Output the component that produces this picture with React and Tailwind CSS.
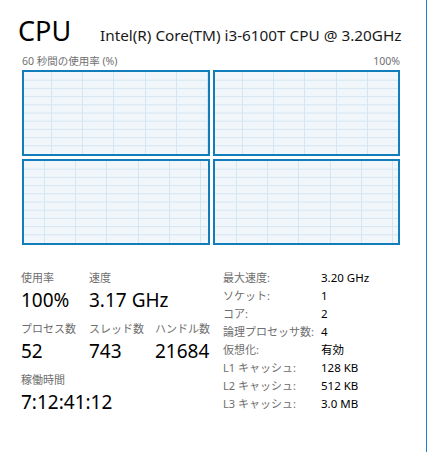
// CPU パフォーマンス画面
const FONT = { fontFamily: '"Noto Sans", "Noto Sans CJK JP", sans-serif' }

const graphs = [
  { offset: 27 },
  { offset: 27 },
  { offset: 20 },
  { offset: 21 },
]

function Graph({ offset }) {
  const xs = []
  for (let x = offset; x < 190; x += 31.2) xs.push(Math.round(x) + 0.5)
  const ys = [1, 2, 3, 4, 5, 6, 7, 8, 9]
  return (
    <div className="relative h-[86px] border-2 border-[#117dbb] bg-[#f1f6fa] overflow-hidden">
      <svg className="absolute inset-0 w-full h-full">
        {ys.map((k) => (
          <line key={'h' + k} x1="0" x2="100%" y1={`${k * 10}%`} y2={`${k * 10}%`} stroke="#d4e6f2" strokeWidth="1" />
        ))}
        {xs.map((x) => (
          <line key={'v' + x} x1={x} x2={x} y1="0" y2="100%" stroke="#d4e6f2" strokeWidth="1" />
        ))}
      </svg>
    </div>
  )
}

function Stat({ label, value }) {
  return (
    <div className="flex flex-col whitespace-nowrap">
      <div className="text-[11px] leading-[16px] text-[#6e6e6e]">{label}</div>
      <div className="mt-[2px] text-[19px] leading-[24px] text-black">{value}</div>
    </div>
  )
}

const details = [
  ['最大速度:', '3.20 GHz'],
  ['ソケット:', '1'],
  ['コア:', '2'],
  ['論理プロセッサ数:', '4'],
  ['仮想化:', '有効'],
  ['L1 キャッシュ:', '128 KB'],
  ['L2 キャッシュ:', '512 KB'],
  ['L3 キャッシュ:', '3.0 MB'],
]

export default function App() {
  return (
    <div style={FONT} className="w-[427px] h-[452px] bg-white border-r border-[#1883d7] overflow-hidden">
      {/* header */}
      <div className="flex items-baseline pt-[13px] pl-[18px] h-[49px] whitespace-nowrap">
        <span className="w-[82px] text-[27px] leading-[36px] text-black">CPU</span>
        <span className="text-[15.3px] leading-[36px] text-[#1a1a1a]">Intel(R) Core(TM) i3-6100T CPU @ 3.20GHz</span>
      </div>

      <div className="mt-[5px] ml-[22px] w-[378px] flex justify-between text-[10.5px] leading-[14px] text-[#707070] whitespace-nowrap">
        <span>60 秒間の使用率 (%)</span>
        <span>100%</span>
      </div>

      {/* graphs */}
      <div className="mt-[2px] ml-[22px] w-[378px] grid grid-cols-2 gap-[3px]">
        {graphs.map((g, i) => (
          <Graph key={i} offset={g.offset} />
        ))}
      </div>

      {/* stats */}
      <div className="mt-[24px] pl-[21px] flex">
        <div className="w-[202px] pt-[1px] flex flex-col gap-[9px]">
          <div className="grid grid-cols-[68px_66px_1fr]">
            <Stat label="使用率" value="100%" />
            <Stat label="速度" value="3.17 GHz" />
          </div>
          <div className="grid grid-cols-[68px_66px_1fr]">
            <Stat label="プロセス数" value="52" />
            <Stat label="スレッド数" value="743" />
            <Stat label="ハンドル数" value="21684" />
          </div>
          <Stat label="稼働時間" value="7:12:41:12" />
        </div>

        <div className="flex flex-col whitespace-nowrap">
          {details.map(([k, v]) => (
            <div key={k} className="flex h-[18px] items-center">
              <span className="w-[98px] text-[11px] text-[#6e6e6e]">{k}</span>
              <span className="text-[11.5px] text-black">{v}</span>
            </div>
          ))}
        </div>
      </div>
    </div>
  )
}
